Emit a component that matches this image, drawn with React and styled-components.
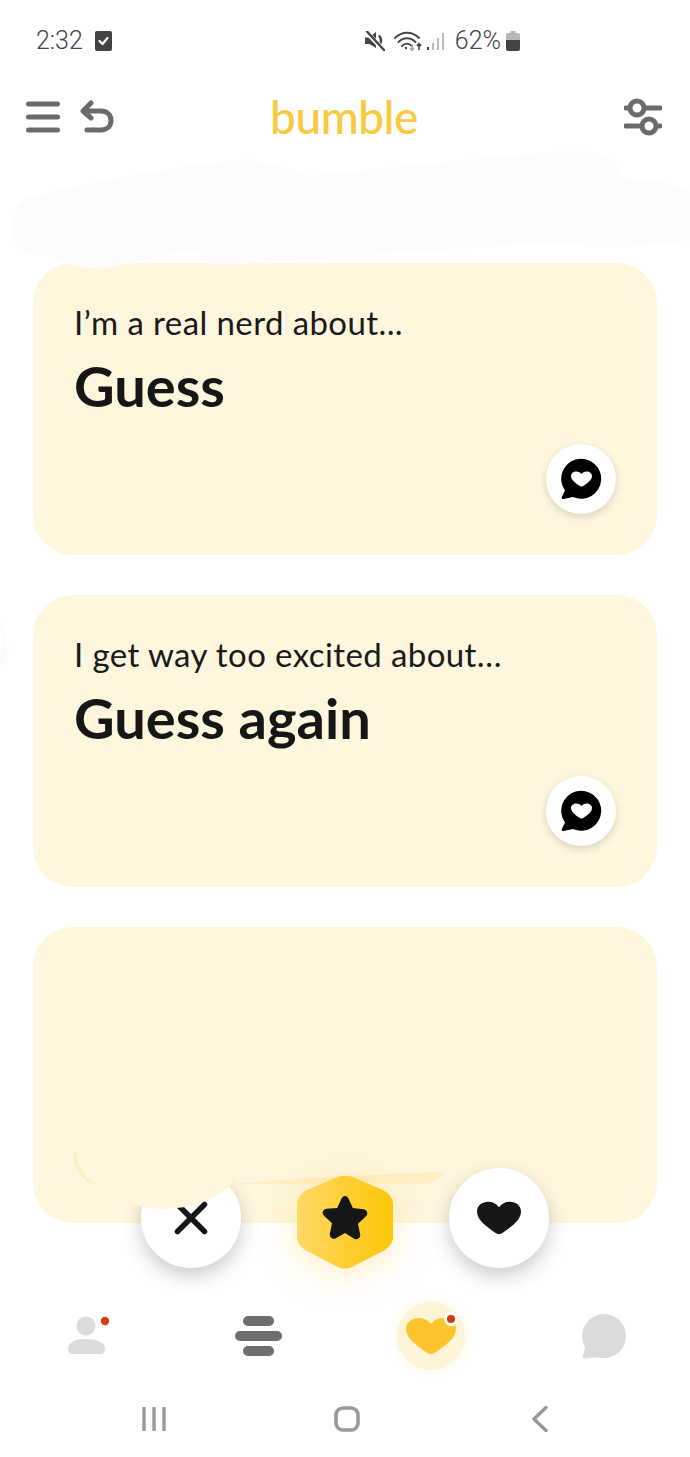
import React from 'react';
import styled, { createGlobalStyle } from 'styled-components';

const GlobalStyle = createGlobalStyle`
  html, body {
    margin: 0;
    padding: 0;
    background: #fff;
  }
  body {
    font-family: Lato, "Liberation Sans", sans-serif;
  }
`;

const HEART = 'M12 21.5c-.6 0-1.2-.3-1.7-.7C6 17.300 1 13.400 1 8.200 1 4.700 3.700 2.500 6.600 2.500c2.300 0 4.200 1.200 5.400 3.200 1.200-2 3.100-3.200 5.400-3.200 2.900 0 5.600 2.200 5.600 5.700 0 5.200-5 9.100-9.300 12.600-.5.400-1.100.7-1.700.7z';

const App = () => {
  return (
    <Page>
      <GlobalStyle />
      <StatusBar>
        <StatusGroup>
          <Clock>2:32</Clock>
          <svg width="17" height="20" viewBox="0 0 17 20">
            <rect width="17" height="20" rx="2" fill="#444" />
            <path d="M4.500 10l3 3 5-6" fill="none" stroke="#fff" strokeWidth="2.200" strokeLinecap="round" strokeLinejoin="round" />
          </svg>
        </StatusGroup>
        <StatusIcons>
          <svg width="20" height="20" viewBox="0 0 20 20">
            <path d="M0 6.500h4.500L11 1v16L4.500 13H0z" fill="#444" />
            <path d="M14 4.500c2 2.500 2.500 5 1.500 8" fill="none" stroke="#444" strokeWidth="2.500" />
            <path d="M1 0.500l18 19" stroke="#fff" strokeWidth="4.500" />
            <path d="M2 0.500l17 18.500" stroke="#444" strokeWidth="2.400" strokeLinecap="round" />
          </svg>
          <WifiIcon width="34" height="20" viewBox="0 0 34 20">
            <path d="M1 7c7-7 17-7 24 0M4.500 11c5-5 12-5 17 0M8 15c3-3 7-3 10 0" fill="none" stroke="#444" strokeWidth="1.800" strokeLinecap="round" />
            <circle cx="12" cy="17" r="1.200" fill="#444" />
            <path d="M18 13v6M16 17l2 2.500 2-2.500" fill="none" stroke="#aaa" strokeWidth="1.600" />
            <path d="M25 19v-6M23 15l2-2.500 2 2.500" fill="none" stroke="#444" strokeWidth="1.600" />
          </WifiIcon>
          <SignalIcon width="18" height="20" viewBox="0 0 18 20">
            <rect x="0" y="16" width="2" height="3" fill="#444" />
            <rect x="5" y="12" width="2" height="7" fill="#bbb" />
            <rect x="10" y="7" width="2" height="12" fill="#bbb" />
            <rect x="15" y="2" width="2" height="17" fill="#bbb" />
          </SignalIcon>
          <Percent>62%</Percent>
          <svg width="14" height="20" viewBox="0 0 14 20">
            <path d="M4.500 0h5v2H12a2 2 0 0 1 2 2v5H0V4a2 2 0 0 1 2-2h2.500z" fill="#b9b9b9" />
            <path d="M0 9h14v9a2 2 0 0 1-2 2H2a2 2 0 0 1-2-2z" fill="#444" />
          </svg>
        </StatusIcons>
      </StatusBar>

      <Header>
        <HeaderLeft>
          <svg width="34" height="32" viewBox="0 0 34 32">
            <path d="M2.500 3h29M2.500 16h29M2.500 29h29" stroke="#6b6b6b" strokeWidth="5" strokeLinecap="round" />
          </svg>
          <svg width="34" height="34" viewBox="0 0 34 34">
            <path d="M11 3L3 11l8 7" fill="none" stroke="#6b6b6b" strokeWidth="5" strokeLinecap="round" strokeLinejoin="round" />
            <path d="M4 11h17c5.500 0 10 3.500 10 9.500S26.500 30 21 30H7" fill="none" stroke="#6b6b6b" strokeWidth="5" strokeLinecap="round" />
          </svg>
        </HeaderLeft>
        <Logo>bumble</Logo>
        <svg width="38" height="38" viewBox="0 0 38 38">
          <path d="M2 10h34M2 28h34" stroke="#6b6b6b" strokeWidth="5" strokeLinecap="round" />
          <circle cx="13" cy="10" r="7" fill="#fff" stroke="#6b6b6b" strokeWidth="5" />
          <circle cx="25" cy="28" r="7" fill="#fff" stroke="#6b6b6b" strokeWidth="5" />
        </svg>
      </Header>

      <RedactionBlob width="690" height="125" viewBox="0 150 690 125">
        <path d="M11 227C12 212 18 203 30 197C90 182 190 164 240 160C258 158 264 164 270 166C285 165 295 170 303 176L560 151C600 148 620 160 623 178C650 180 678 184 690 192V240C660 246 620 248 590 247C575 244 560 243 546 243L224 265C208 264 200 258 198 250C170 252 150 260 132 263C118 265 105 270 92 268C80 268 60 262 48 255H30C18 252 11 240 11 227Z" fill="#fcfcfc" />
      </RedactionBlob>

      <Main>
        <Card>
          <Prompt>I’m a real nerd about...</Prompt>
          <Answer>Guess</Answer>
          <ChatButton>
            <BubbleIcon />
          </ChatButton>
        </Card>
        <Card>
          <PeekShadow />
          <Prompt>I get way too excited about…</Prompt>
          <Answer>Guess again</Answer>
          <ChatButton>
            <BubbleIcon />
          </ChatButton>
        </Card>
        <Card $tall>
          <CardScribble width="624" height="296" viewBox="33 927 624 296">
            <path d="M232 1184C300 1178 380 1174 444 1172C438 1180 432 1184 424 1184Z" fill="#fdeec4" />
            <path d="M76 1150C77 1168 88 1183 100 1184L122 1201C150 1212 180 1210 200 1203C215 1197 226 1190 232 1184V1150Z" fill="#fef6dd" />
            <path d="M73 1152C73 1170 84 1184 98 1184C86 1180 77 1168 76 1152Z" fill="#fdeec4" />
          </CardScribble>
        </Card>
      </Main>

      <Actions>
        <RoundAction>
          <svg width="34" height="34" viewBox="0 0 34 34">
            <path d="M3.500 3.500l27 27M30.500 3.500l-27 27" stroke="#161616" strokeWidth="5.500" strokeLinecap="round" />
          </svg>
        </RoundAction>
        <StarAction>
          <svg width="96" height="94" viewBox="0 0 96 94">
            <defs>
              <linearGradient id="hexFill" x1="0" y1="0" x2="1" y2="0">
                <stop offset="0" stopColor="#fdd863" />
                <stop offset="1" stopColor="#ffc609" />
              </linearGradient>
            </defs>
            <path d="M38 3C44 0 52 0 58 3L86 15C92 18 96 23 96 30V62C96 68 92 72 88 75L55 92C50 94 46 94 41 92L8 75C4 72 0 68 0 62V30C0 23 4 18 10 15Z" fill="url(#hexFill)" />
          </svg>
          <StarGlyph width="46" height="44" viewBox="0 0 46 44">
            <path d="M23 0c1.500 0 2.800 1 3.500 2.500l4.300 9.500 10.800 1.200c3.500.400 5 4.500 2.400 7l-8 7.500 2.200 10.800c.7 3.400-3 6-6 4.200L23 37l-9.200 5.200c-3 1.800-6.700-.8-6-4.200L10 27.200l-8-7.500c-2.600-2.500-1.100-6.600 2.400-7L15.200 12l4.300-9.500C20.200 1 21.500 0 23 0z" fill="#161616" />
          </StarGlyph>
        </StarAction>
        <RoundAction>
          <svg width="44" height="34" viewBox="1 2 22 20" preserveAspectRatio="none">
            <path d={HEART} fill="#161616" />
          </svg>
        </RoundAction>
      </Actions>

      <TabBar>
        <Tab>
          <ProfileIcon width="44" height="44" viewBox="0 0 44 44">
            <circle cx="20" cy="12" r="9.500" fill="#dcdcdc" />
            <path d="M2 35c0-7 8-10 18-10s19 3 19 10c0 3-2 5-5 5H7c-3 0-5-2-5-5z" fill="#dcdcdc" />
            <circle cx="39" cy="7" r="4.200" fill="#d33f0f" />
          </ProfileIcon>
        </Tab>
        <Tab>
          <StackIcon>
            <StackBar $short />
            <StackBar />
            <StackBar $short />
          </StackIcon>
        </Tab>
        <Tab>
          <LikesHalo>
            <svg width="50" height="38" viewBox="1 2 22 20" preserveAspectRatio="none">
              <path d={HEART} fill="#fdc42b" />
            </svg>
            <RedDot />
          </LikesHalo>
        </Tab>
        <Tab>
          <MessagesIcon width="46" height="46" viewBox="0 0 46 46">
            <path d="M5 34A22 22 0 1 1 18 44.200L5 45.600C3 45.800 2.500 44.500 3 43Z" fill="#dcdcdc" />
          </MessagesIcon>
        </Tab>
      </TabBar>

      <SystemNav>
        <SystemKey>
          <svg width="24" height="24" viewBox="0 0 24 24">
            <path d="M2 1v22M12 1v22M22 1v22" stroke="#999" strokeWidth="3.400" strokeLinecap="round" />
          </svg>
        </SystemKey>
        <SystemKey>
          <svg width="26" height="26" viewBox="0 0 26 26">
            <rect x="2" y="2" width="22" height="22" rx="7" fill="none" stroke="#999" strokeWidth="3.600" />
          </svg>
        </SystemKey>
        <SystemKey>
          <svg width="16" height="26" viewBox="0 0 16 26">
            <path d="M14 1.500L2 13l12 11.500" fill="none" stroke="#999" strokeWidth="3.400" strokeLinecap="round" strokeLinejoin="round" />
          </svg>
        </SystemKey>
      </SystemNav>
    </Page>
  );
};

const BubbleIcon = () => (
  <svg width="42" height="42" viewBox="0 0 42 42">
    <path d="M5 32.500A20 20 0 1 1 13 39L3.500 41C2 41.300 1.400 40 1.800 39Z" fill="#000" />
    <svg x="11" y="13" width="21" height="16" viewBox="1 2 22 20" preserveAspectRatio="none">
      <path d={HEART} fill="#fff" />
    </svg>
  </svg>
);

export default App;

const Page = styled.div`
  position: relative;
  width: 690px;
  height: 1457px;
  overflow: hidden;
  background: #fff;
`;

const StatusBar = styled.div`
  display: flex;
  align-items: center;
  justify-content: space-between;
  height: 82px;
  padding: 0 170px 0 36px;
  box-sizing: border-box;
  color: #444;
  font-family: Roboto, "Liberation Sans", sans-serif;
  font-weight: 300;
  font-size: 25px;
`;

const StatusGroup = styled.div`
  display: flex;
  align-items: center;
  gap: 12px;
`;

const Clock = styled.span`
  line-height: 30px;
`;

const StatusIcons = styled.div`
  display: flex;
  align-items: center;
`;

const WifiIcon = styled.svg`
  margin-left: 9px;
`;

const SignalIcon = styled.svg`
  margin-left: -1px;
`;

const Percent = styled.span`
  margin: 0 5px 0 10px;
  line-height: 30px;
`;

const Header = styled.header`
  display: grid;
  grid-template-columns: 1fr auto 1fr;
  align-items: center;
  justify-items: end;
  height: 70px;
  padding: 0 28px 0 26px;
`;

const HeaderLeft = styled.div`
  display: flex;
  align-items: center;
  gap: 20px;
  justify-self: start;
`;

const Logo = styled.div`
  color: #fbc93d;
  font-size: 46px;
  font-weight: 500;
  line-height: 46px;
  letter-spacing: -0.5px;
`;

const RedactionBlob = styled.svg`
  position: absolute;
  top: 150px;
  left: 0;
  z-index: 1;
`;

const Main = styled.main`
  display: flex;
  flex-direction: column;
  gap: 40px;
  padding: 111px 33px 0;
`;

const Card = styled.section`
  position: relative;
  height: ${(props) => (props.$tall ? '296px' : '292px')};
  padding: 39px 41px;
  box-sizing: border-box;
  border-radius: 40px;
  background: #fef6dd;
`;

const PeekShadow = styled.div`
  position: absolute;
  top: 15px;
  left: -100px;
  width: 70px;
  height: 70px;
  border-radius: 50%;
  box-shadow: 0 2px 8px rgba(0, 0, 0, 0.05);
`;

const Prompt = styled.p`
  margin: 0;
  color: #1a1a1a;
  font-size: 33px;
  line-height: 40px;
  letter-spacing: 0.4px;
`;

const Answer = styled.h2`
  margin: 14px 0 0;
  color: #161616;
  font-size: 56px;
  font-weight: 700;
  line-height: 60px;
`;

const ChatButton = styled.div`
  position: absolute;
  right: 41px;
  bottom: 41px;
  display: flex;
  align-items: center;
  justify-content: center;
  width: 70px;
  height: 70px;
  border-radius: 50%;
  background: #fff;
  box-shadow: 0 3px 8px rgba(0, 0, 0, 0.14);
`;

const CardScribble = styled.svg`
  position: absolute;
  top: 0;
  left: 0;
  z-index: 3;
  overflow: visible;
`;

const Actions = styled.div`
  display: flex;
  align-items: center;
  justify-content: center;
  gap: 56px;
  margin-top: -55px;
  height: 100px;
`;

const RoundAction = styled.div`
  position: relative;
  z-index: 2;
  display: flex;
  align-items: center;
  justify-content: center;
  width: 100px;
  height: 100px;
  border-radius: 50%;
  background: #fff;
  box-shadow: 0 8px 20px rgba(0, 0, 0, 0.2);
`;

const StarAction = styled.div`
  position: relative;
  z-index: 4;
  display: flex;
  width: 96px;
  height: 94px;
  margin-top: 7px;
  filter: drop-shadow(0 6px 18px rgba(255, 200, 50, 0.3));
`;

const StarGlyph = styled.svg`
  position: absolute;
  top: 21px;
  left: 25px;
`;

const TabBar = styled.nav`
  display: grid;
  grid-template-columns: repeat(4, 1fr);
  align-items: center;
  justify-items: center;
  height: 68px;
  margin-top: 34px;
`;

const Tab = styled.div`
  display: flex;
  align-items: center;
  justify-content: center;
`;

const ProfileIcon = styled.svg`
  margin-left: 4px;
`;

const MessagesIcon = styled.svg`
  margin-left: -2px;
`;

const StackIcon = styled.div`
  display: flex;
  flex-direction: column;
  align-items: center;
  gap: 5px;
`;

const StackBar = styled.span`
  display: block;
  width: ${(props) => (props.$short ? '31px' : '47px')};
  height: 10px;
  border-radius: 5px;
  background: #6e6e6e;
`;

const LikesHalo = styled.div`
  position: relative;
  display: flex;
  align-items: center;
  justify-content: center;
  width: 68px;
  height: 68px;
  border-radius: 50%;
  background: #fef4d8;
  box-shadow: 0 0 6px 3px rgba(254, 244, 216, 0.45);
`;

const RedDot = styled.span`
  position: absolute;
  top: 10px;
  right: 7px;
  width: 8px;
  height: 8px;
  border: 3px solid #fff;
  border-radius: 50%;
  background: #cf3a0c;
`;

const SystemNav = styled.div`
  display: grid;
  grid-template-columns: repeat(3, 193px);
  justify-content: center;
  justify-items: center;
  align-items: center;
  height: 87px;
  padding: 22px 0 12px 4px;
  box-sizing: border-box;
`;

const SystemKey = styled.div`
  display: flex;
  align-items: center;
  justify-content: center;
`;
